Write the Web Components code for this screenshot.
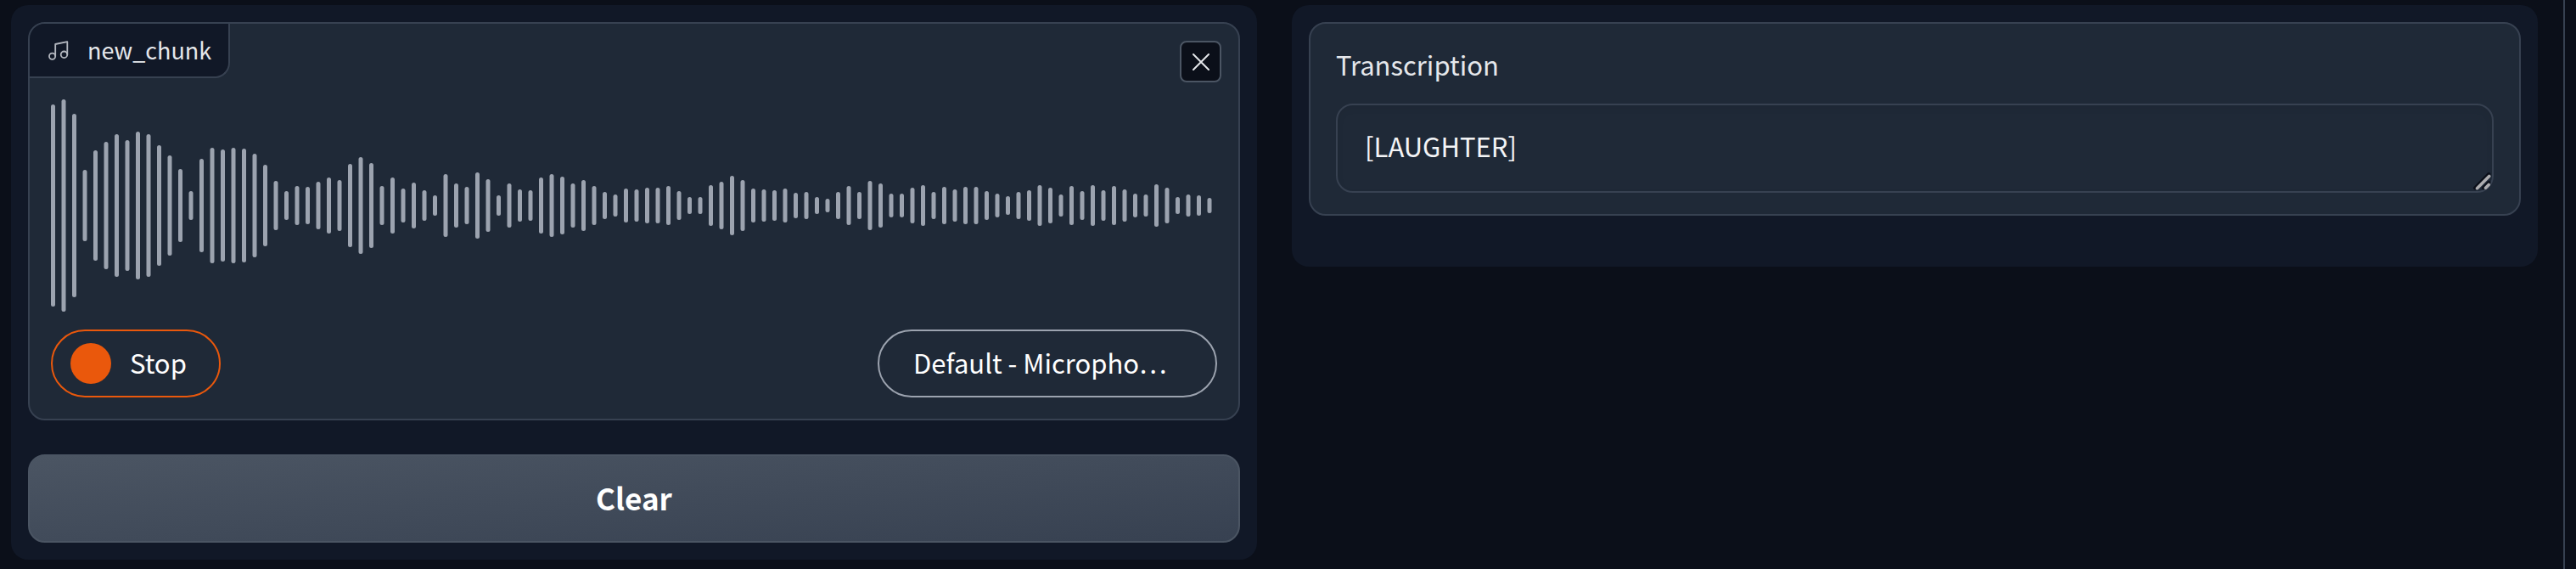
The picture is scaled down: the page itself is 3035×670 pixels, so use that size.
<!DOCTYPE html>
<html lang="en">
<head>
<meta charset="utf-8">
<title>Audio transcription</title>
<style>
  html { background: #0b0f19; }
  body {
    margin: 0;
    background: #0b0f19;
    color: #f3f4f6;
    font-family: "Noto Sans CJK KR", "Noto Sans", sans-serif;
    font-size: 31px;
    --panel: #111827;
    --block: #1f2937;
    --border: #374151;
    --border-strong: #4b5563;
    --accent: #ea580c;
    --muted: #9ca3af;
  }
</style>
</head>
<body>
<app-shell>
  <panel-column>
    <audio-recorder label="new_chunk"></audio-recorder>
    <clear-button>Clear</clear-button>
  </panel-column>
  <panel-column>
    <text-result label="Transcription" value="[LAUGHTER]"></text-result>
    <panel-footer></panel-footer>
  </panel-column>
</app-shell>

<script>
const define = (name, html, setup) => {
  const template = document.createElement('template');
  template.innerHTML = html;
  customElements.define(name, class extends HTMLElement {
    connectedCallback() {
      if (this.shadowRoot) return;
      const root = this.attachShadow({ mode: 'open' });
      root.append(template.content.cloneNode(true));
      if (setup) setup(this, root);
    }
  });
};

define('app-shell', `
  <style>
    :host {
      display: grid;
      grid-template-columns: 1fr 1fr;
      align-items: start;
      gap: 41px;
      box-sizing: border-box;
      min-height: 100vh;
      margin-right: 13px;
      padding: 6px 30px 11px 13px;
      border-right: 2px solid var(--border);
    }
  </style>
  <slot></slot>`);

define('panel-column', `
  <style>
    :host {
      display: flex;
      flex-direction: column;
      gap: 40px;
      min-width: 0;
      padding: 20px;
      border-radius: 20px;
      background: var(--panel);
    }
  </style>
  <slot></slot>`);

define('panel-footer', `
  <style>
    :host { display: block; }
  </style>
  <slot></slot>`);

define('block-label', `
  <style>
    :host {
      display: flex;
      align-items: center;
      gap: 22px;
      box-sizing: border-box;
      height: 64px;
      padding: 0 20px 0 22px;
      border: solid var(--border);
      border-width: 0 2px 2px 0;
      border-radius: 18px 0 18px 0;
      background: var(--panel);
      color: #e5e7eb;
      font-size: 27px;
      line-height: 40px;
    }
    svg { width: 24px; height: 24px; color: #b4b8c0; }
  </style>
  <svg viewBox="0 0 24 24" fill="none" stroke="currentColor" stroke-width="1.8" stroke-linejoin="round" aria-hidden="true">
    <path d="M8.200 19.300V5L22.300 2.200V17.300"/>
    <circle cx="4.600" cy="19.300" r="3.600"/>
    <circle cx="18.500" cy="17.300" r="3.800"/>
  </svg>
  <slot></slot>`);

define('wave-form', `
  <style>
    :host { display: block; }
    svg { display: block; width: 100%; height: auto; fill: var(--muted); }
  </style>
  <svg viewBox="0 0 1374 252" role="img" aria-label="Recorded waveform"></svg>`,
  (host, root) => {
    const levels = [
      119,125,108,42,65,75,84,77,87,84,71,59,43,17,55,68,66,68,67,61,48,29,17,23,22,28,33,30,49,57,50,23,33,20,
      27,18,12,37,26,22,39,31,12,26,19,18,33,37,34,26,30,23,16,13,20,19,21,21,23,17,10,10,24,28,35,30,20,19,18,20,15,16,
      10,8,16,23,16,29,26,14,14,21,24,16,22,19,22,22,17,14,11,16,18,24,21,13,23,17,24,18,23,19,14,13,25,21,10,13,12,9
    ];
    root.querySelector('svg').innerHTML = levels.map((h, i) =>
      `<rect x="${i * 12.5}" y="${126 - h}" width="5" height="${h * 2}" rx="2.5"/>`).join('');
  });

define('audio-recorder', `
  <style>
    :host {
      display: block;
      border: 2px solid var(--border);
      border-radius: 20px;
      background: var(--block);
    }
    header { display: flex; justify-content: space-between; align-items: flex-start; height: 88px; }
    .close {
      display: grid;
      place-items: center;
      width: 49px;
      height: 49px;
      margin: 20px 20px 0 0;
      padding: 0;
      border: 2px solid var(--border-strong);
      border-radius: 8px;
      background: #0b0f19;
      color: #e5e7eb;
    }
    .close svg { width: 20px; height: 20px; }
    .body { display: grid; gap: 20px; padding: 0 25px 25px; }
    .controls { display: flex; justify-content: space-between; }
    .stop, select {
      box-sizing: border-box;
      height: 80px;
      border-radius: 40px;
      background: transparent;
      color: #fff;
      font: inherit;
      line-height: 46px;
    }
    .stop {
      display: flex;
      align-items: center;
      gap: 22px;
      width: 200px;
      padding: 0 21px;
      border: 2px solid var(--accent);
    }
    .stop::before { content: ""; width: 48px; height: 48px; border-radius: 50%; background: var(--accent); }
    .stop span { padding-bottom: 2px; }
    select {
      appearance: none;
      width: 400px;
      padding: 0 40px 2px;
      border: 2px solid var(--muted);
    }
  </style>
  <header>
    <block-label></block-label>
    <button class="close" type="button" aria-label="Clear recording">
      <svg viewBox="0 0 20 20" fill="none" stroke="currentColor" stroke-width="2" stroke-linecap="round" aria-hidden="true"><path d="M1 1L19 19M19 1L1 19"/></svg>
    </button>
  </header>
  <div class="body">
    <wave-form></wave-form>
    <div class="controls">
      <button class="stop" type="button"><span>Stop</span></button>
      <select aria-label="Input device"><option>Default - Micropho…</option></select>
    </div>
  </div>`,
  (host, root) => { root.querySelector('block-label').append(host.getAttribute('label')); });

define('clear-button', `
  <style>
    :host { display: block; }
    button {
      display: block;
      box-sizing: border-box;
      width: 100%;
      height: 104px;
      padding: 0 0 2px;
      border: 2px solid var(--border-strong);
      border-radius: 20px;
      background: linear-gradient(to bottom right, #4b5563, #374151);
      color: #fff;
      font: inherit;
      font-size: 35px;
      font-weight: 700;
      line-height: 50px;
    }
  </style>
  <button type="button"><slot></slot></button>`);

define('text-result', `
  <style>
    :host {
      display: block;
      padding: 22px 30px 25px;
      border: 2px solid var(--border);
      border-radius: 20px;
      background: var(--block);
    }
    label { display: block; margin-bottom: 20px; color: #e5e7eb; line-height: 52px; }
    .field { position: relative; }
    textarea {
      display: block;
      box-sizing: border-box;
      width: 100%;
      height: 105px;
      padding: 24px 32px;
      border: 2px solid var(--border);
      border-radius: 20px;
      background: transparent;
      box-shadow: inset 0 4px 8px rgb(0 0 0 / 5%);
      color: #f3f4f6;
      font: inherit;
      line-height: 48px;
      resize: none;
      overflow: hidden;
    }
    svg { position: absolute; right: 3px; bottom: 3px; width: 22px; height: 22px; pointer-events: none; }
  </style>
  <label for="result"></label>
  <div class="field">
    <textarea id="result" rows="1"></textarea>
    <svg viewBox="0 0 22 22" fill="none" stroke-linecap="round" aria-hidden="true">
      <path d="M3 19.300L19.300 3M13 19.300L19.300 13" stroke="#0b0f19" stroke-width="4"/>
      <path d="M5.500 19.700L19.700 5.500M15.500 19.200L19.200 15.500" stroke="#adadb0" stroke-width="3.600"/>
    </svg>
  </div>`,
  (host, root) => {
    root.querySelector('label').textContent = host.getAttribute('label');
    root.querySelector('textarea').value = host.getAttribute('value');
  });
</script>
</body>
</html>
